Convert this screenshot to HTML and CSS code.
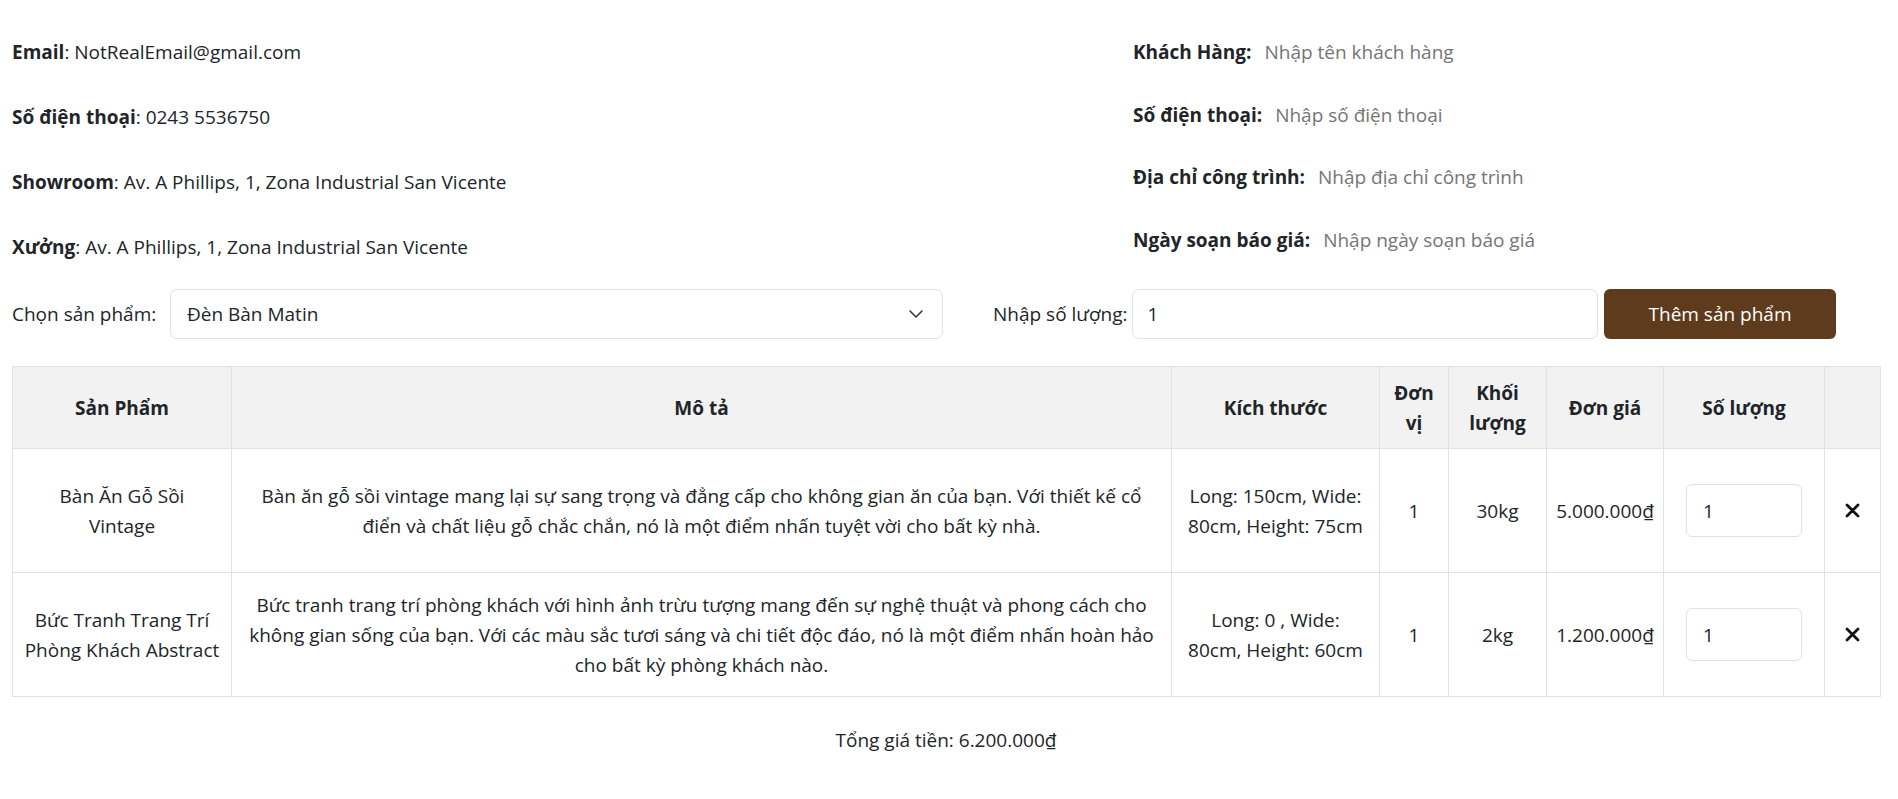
FILE: index.html
```html
<!DOCTYPE html>
<html lang="vi">
<head>
<meta charset="utf-8">
<title>Báo giá</title>
<link rel="stylesheet" href="styles.css">
</head>
<body>
<div class="page">
  <section class="info">
    <div class="contact">
      <p><b>Email</b>: NotRealEmail@gmail.com</p>
      <p><b>Số điện thoại</b>: 0243 5536750</p>
      <p><b>Showroom</b>: Av. A Phillips, 1, Zona Industrial San Vicente</p>
      <p><b>Xưởng</b>: Av. A Phillips, 1, Zona Industrial San Vicente</p>
    </div>
    <div class="customer">
      <div class="field"><label>Khách Hàng:</label><input type="text" placeholder="Nhập tên khách hàng"></div>
      <div class="field"><label>Số điện thoại:</label><input type="text" placeholder="Nhập số điện thoại"></div>
      <div class="field"><label>Địa chỉ công trình:</label><input type="text" placeholder="Nhập địa chỉ công trình"></div>
      <div class="field"><label>Ngày soạn báo giá:</label><input type="text" placeholder="Nhập ngày soạn báo giá"></div>
    </div>
  </section>

  <section class="picker">
    <div class="pick-left">
      <label class="pick-label">Chọn sản phẩm:</label>
      <div class="select-wrap">
        <select class="product-select"><option>Đèn Bàn Matin</option></select>
        <svg class="chevron" width="14" height="8" viewBox="0 0 14 8"><path d="M1 1l6 6 6-6" fill="none" stroke="#343a40" stroke-width="1.6" stroke-linecap="round" stroke-linejoin="round"/></svg>
      </div>
    </div>
    <div class="pick-right">
      <label class="qty-label">Nhập số lượng:</label>
      <input class="qty-input" type="text" value="1">
      <button class="add-btn" type="button">Thêm sản phẩm</button>
    </div>
  </section>

  <table class="quote">
    <colgroup>
      <col class="c-name"><col class="c-desc"><col class="c-size"><col class="c-unit"><col class="c-weight"><col class="c-price"><col class="c-qty"><col class="c-del">
    </colgroup>
    <thead>
      <tr>
        <th>Sản Phẩm</th>
        <th>Mô tả</th>
        <th>Kích thước</th>
        <th>Đơn vị</th>
        <th>Khối lượng</th>
        <th>Đơn giá</th>
        <th>Số lượng</th>
        <th></th>
      </tr>
    </thead>
    <tbody>
      <tr>
        <td class="name">Bàn Ăn Gỗ Sồi Vintage</td>
        <td>Bàn ăn gỗ sồi vintage mang lại sự sang trọng và đẳng cấp cho không gian ăn của bạn. Với thiết kế cổ điển và chất liệu gỗ chắc chắn, nó là một điểm nhấn tuyệt vời cho bất kỳ nhà.</td>
        <td class="size">Long: 150cm, Wide: 80cm, Height: 75cm</td>
        <td>1</td>
        <td>30kg</td>
        <td class="price">5.000.000₫</td>
        <td><input class="row-qty" type="text" value="1"></td>
        <td><svg class="del" width="15" height="15" viewBox="0 0 15 15"><path d="M2 2l11 11M13 2L2 13" stroke="#111" stroke-width="2.8" stroke-linecap="round"/></svg></td>
      </tr>
      <tr>
        <td class="name">Bức Tranh Trang Trí Phòng Khách Abstract</td>
        <td>Bức tranh trang trí phòng khách với hình ảnh trừu tượng mang đến sự nghệ thuật và phong cách cho không gian sống của bạn. Với các màu sắc tươi sáng và chi tiết độc đáo, nó là một điểm nhấn hoàn hảo cho bất kỳ phòng khách nào.</td>
        <td class="size">Long: 0 , Wide: 80cm, Height: 60cm</td>
        <td>1</td>
        <td>2kg</td>
        <td class="price">1.200.000₫</td>
        <td><input class="row-qty" type="text" value="1"></td>
        <td><svg class="del" width="15" height="15" viewBox="0 0 15 15"><path d="M2 2l11 11M13 2L2 13" stroke="#111" stroke-width="2.8" stroke-linecap="round"/></svg></td>
      </tr>
    </tbody>
  </table>

  <p class="total">Tổng giá tiền: 6.200.000₫</p>
</div>
</body>
</html>
```

FILE: styles.css
```css
* { box-sizing: border-box; }

body {
  margin: 0;
  font-family: "Open Sans", "Noto Sans", sans-serif;
  font-size: 19px;
  line-height: 30px;
  color: #212529;
  background: #fff;
}

.page {
  padding: 37px 18px 0 12px;
}

.info {
  display: grid;
  grid-template-columns: 1121px 1fr;
}

.contact {
  display: flex;
  flex-direction: column;
  gap: 35px;
}

.contact p { margin: 0; }
.contact b { font-weight: 700; }

.customer {
  display: flex;
  flex-direction: column;
  gap: 32.7px;
}

.field {
  display: flex;
  align-items: center;
  height: 30px;
}

.field label {
  font-weight: 700;
  margin-right: 13px;
  white-space: nowrap;
}

.field input {
  border: none;
  outline: none;
  background: transparent;
  font: inherit;
  color: #212529;
  padding: 0;
  width: 420px;
}

.field input::placeholder { color: #757575; }

.picker {
  margin-top: 27px;
  display: grid;
  grid-template-columns: 934px 934px;
  height: 50px;
}

.pick-left {
  display: flex;
  align-items: center;
  padding-right: 3px;
}

.pick-label {
  flex: none;
  width: 158px;
  white-space: nowrap;
}

.select-wrap {
  position: relative;
  flex: 1;
  height: 50px;
}

.product-select {
  appearance: none;
  -webkit-appearance: none;
  width: 100%;
  height: 50px;
  border: 1px solid #dee2e6;
  border-radius: 7px;
  background: #fff;
  padding: 0 48px 0 16px;
  font: inherit;
  color: #212529;
}

.chevron {
  position: absolute;
  right: 20px;
  top: 21px;
  pointer-events: none;
}

.pick-right {
  display: flex;
  align-items: center;
  padding-left: 47px;
  padding-right: 44px;
}

.qty-label {
  flex: none;
  margin-right: 5px;
  white-space: nowrap;
}

.qty-input {
  flex: 1;
  min-width: 0;
  height: 50px;
  border: 1px solid #dee2e6;
  border-radius: 7px;
  padding: 0 14px;
  font: inherit;
  color: #212529;
}

.add-btn {
  flex: none;
  width: 232px;
  height: 50px;
  margin-left: 6px;
  background: #5e3b1d;
  color: #fff;
  border: none;
  border-radius: 6px;
  font: inherit;
}

.quote {
  margin-top: 27px;
  width: 1868px;
  border-collapse: collapse;
  table-layout: fixed;
}

.c-name { width: 219px; }
.c-desc { width: 940px; }
.c-size { width: 208px; }
.c-unit { width: 69px; }
.c-weight { width: 98px; }
.c-price { width: 117px; }
.c-qty { width: 161px; }
.c-del { width: 56px; }

.quote th,
.quote td {
  border: 1px solid #dee2e6;
  padding: 10px;
  text-align: center;
  vertical-align: middle;
}

.quote thead th {
  background: #f2f2f2;
  font-weight: 700;
}

.quote thead tr { height: 82px; }
.quote tbody tr { height: 124px; }

.quote td.name { padding-left: 11.5px; padding-right: 11.5px; }
.quote td.size { padding-left: 12px; padding-right: 12px; }
.quote td.price { white-space: nowrap; padding-left: 4px; padding-right: 4px; }

.row-qty {
  width: 116px;
  height: 53px;
  border: 1px solid #dee2e6;
  border-radius: 6px;
  padding: 0 16px;
  font: inherit;
  color: #212529;
  vertical-align: middle;
}

.del {
  display: block;
  margin: 0 auto;
}

.total {
  margin: 28px 0 0;
  text-align: center;
}
```
